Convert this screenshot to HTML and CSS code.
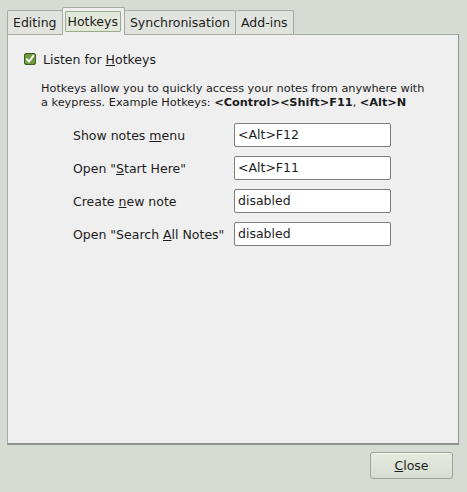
FILE: index.html
```html
<!DOCTYPE html>
<html>
<head>
<meta charset="utf-8">
<link rel="stylesheet" href="styles.css">
</head>
<body>
<div class="window">
  <div class="tabs">
    <div class="tab first">Editing</div>
    <div class="tab active"><span class="tab-inner">Hotkeys</span></div>
    <div class="tab">Synchronisation</div>
    <div class="tab">Add-ins</div>
  </div>
  <div class="panel">
    <div class="check-row">
      <span class="checkbox">
        <svg width="12" height="12" viewBox="0 0 12 12"><rect x="0.5" y="0.5" width="11" height="11" rx="1.5" fill="#6e9a3c" stroke="#3f5f22"/><path d="M2.8 6.2 L5 8.6 L9.3 2.9" fill="none" stroke="#fff" stroke-width="2" stroke-linecap="round" stroke-linejoin="round"/></svg>
      </span>
      <span>Listen for <u>H</u>otkeys</span>
    </div>
    <p class="desc">Hotkeys allow you to quickly access your notes from anywhere with<br>a keypress. Example Hotkeys: <b>&lt;Control&gt;&lt;Shift&gt;F11</b>, <b>&lt;Alt&gt;N</b></p>
    <div class="grid">
      <div class="label">Show notes <u>m</u>enu</div>
      <div class="entry">&lt;Alt&gt;F12</div>
      <div class="label">Open "<u>S</u>tart Here"</div>
      <div class="entry">&lt;Alt&gt;F11</div>
      <div class="label">Create <u>n</u>ew note</div>
      <div class="entry">disabled</div>
      <div class="label">Open "Search <u>A</u>ll Notes"</div>
      <div class="entry">disabled</div>
    </div>
  </div>
  <div class="footer">
    <div class="button"><u>C</u>lose</div>
  </div>
</div>
</body>
</html>
```
FILE: styles.css
```css
html, body {
  margin: 0;
  padding: 0;
}
body {
  background: #d6dbd3;
  font-family: "DejaVu Sans", sans-serif;
  font-size: 12.5px;
  color: #1c1c1c;
  width: 467px;
  height: 492px;
  overflow: hidden;
}
.window {
  padding: 7px 8px 0 7px;
}
.tabs {
  display: flex;
  align-items: flex-end;
  height: 27px;
  position: relative;
  z-index: 1;
}
.tab {
  box-sizing: border-box;
  height: 24px;
  padding: 0 5px;
  line-height: 23px;
  background: #e1e3de;
  border: 1px solid #a6a9a3;
  border-bottom: none;
  border-left: none;
  border-radius: 2px 2px 0 0;
  color: #1c1c1c;
}
.tab.first {
  border-left: 1px solid #a6a9a3;
}
.tab.active {
  height: 28px;
  margin-bottom: -1px;
  background: #efefef;
  padding: 3px 3px 0 2px;
  line-height: normal;
  border-left: 1px solid #a6a9a3;
  margin-left: -1px;
}
.tab-inner {
  display: block;
  box-sizing: border-box;
  height: 21px;
  line-height: 19px;
  padding: 0 2px 0 2px;
  border: 1px solid #9aab89;
  background: #e2e8da;
  border-radius: 1px;
}
.panel {
  box-sizing: border-box;
  height: 411px;
  background: #efefef;
  border: 1px solid #a8aaa5;
  border-right-color: #8f918c;
  border-bottom: 2px solid #8f918c;
  padding: 17px 0 0 16px;
}
.check-row {
  display: flex;
  align-items: center;
  gap: 7px;
  height: 14px;
}
.checkbox {
  display: flex;
  width: 12px;
  height: 12px;
}
.desc {
  margin: 16px 0 0 17px;
  font-size: 11.3px;
  line-height: 14px;
}
.grid {
  display: grid;
  grid-template-columns: 161px 157px;
  grid-auto-rows: 24px;
  row-gap: 9px;
  margin: 13px 0 0 49px;
  align-items: center;
}
.entry {
  box-sizing: border-box;
  height: 24px;
  background: #fff;
  border: 1px solid #7c7e7a;
  border-radius: 2px;
  padding-left: 3px;
  line-height: 22px;
}
.footer {
  display: flex;
  justify-content: flex-end;
  padding: 7px 6px 0 0;
}
.button {
  box-sizing: border-box;
  width: 83px;
  height: 27px;
  line-height: 25px;
  text-align: center;
  border: 1px solid #9ea39a;
  border-radius: 3px;
  background: linear-gradient(#e6eadf, #d8ddd1);
  box-shadow: inset 0 1px 0 #f6f8f3;
}
```
